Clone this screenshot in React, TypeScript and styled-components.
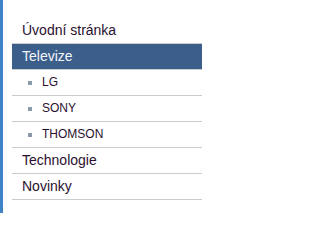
import React from "react";
import styled, { createGlobalStyle } from "styled-components";

const GlobalStyle = createGlobalStyle`
  html, body {
    margin: 0;
    padding: 0;
    background: #ffffff;
  }
  body {
    font-family: "Liberation Sans", Arial, sans-serif;
  }
`;

const Sidebar = styled.nav`
  box-sizing: border-box;
  width: 214px;
  height: 213px;
  border-left: 3px solid #3f83c7;
  padding: 18px 0 0 9px;
`;

const Menu = styled.ul`
  list-style: none;
  margin: 0;
  padding: 0;
  width: 190px;
`;

const Item = styled.li<{ $active?: boolean; $sub?: boolean }>`
  position: relative;
  height: 25px;
  line-height: 25px;
  border-bottom: 1px solid #cccccc;
  padding-left: ${(p) => (p.$sub ? "30px" : "10px")};
  font-size: ${(p) => (p.$sub ? "12px" : "14px")};
  color: ${(p) => (p.$active ? "#f4f6fa" : "#2a1030")};
  background: ${(p) => (p.$active ? "#3b5e8b" : "transparent")};

  ${(p) =>
    p.$sub &&
    `
    &::before {
      content: "";
      position: absolute;
      left: 16px;
      top: 11px;
      width: 4px;
      height: 4px;
      background: #8a9aab;
    }
  `}
`;

const items = [
  { label: "Úvodní stránka" },
  { label: "Televize", active: true },
  { label: "LG", sub: true },
  { label: "SONY", sub: true },
  { label: "THOMSON", sub: true },
  { label: "Technologie" },
  { label: "Novinky" },
];

export default function App() {
  return (
    <>
      <GlobalStyle />
      <Sidebar>
        <Menu>
          {items.map((it) => (
            <Item key={it.label} $active={it.active} $sub={it.sub}>
              {it.label}
            </Item>
          ))}
        </Menu>
      </Sidebar>
    </>
  );
}
